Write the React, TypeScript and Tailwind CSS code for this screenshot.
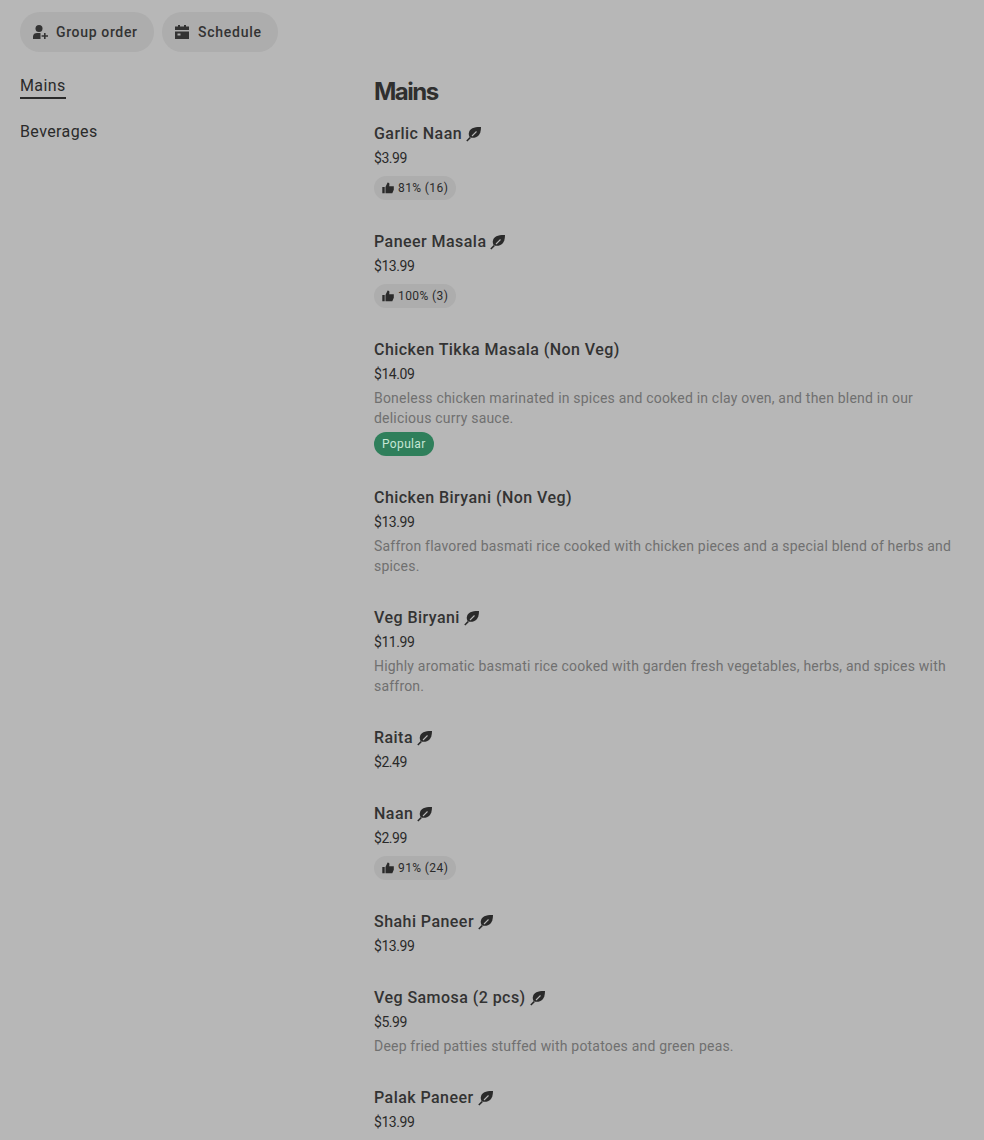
function Leaf() {
  return (
    <svg width="16" height="16" viewBox="0 0 16 16" className="shrink-0 text-[#2a2a2a]" fill="none">
      <path d="M15 1C9 .8 3.2 2 2.8 7.5c-.1 1.6.4 3 1.2 4C9.5 12.5 15 11 15 1Z" fill="currentColor" />
      <path d="M.8 15 4.2 11.6" stroke="currentColor" strokeWidth="1.5" />
      <path d="M6 10 10.5 5.5" stroke="#b7b7b7" strokeWidth="1.1" />
    </svg>
  );
}
function Thumb() {
  return (
    <svg width="12" height="12" viewBox="0 0 12 12" className="shrink-0 text-[#2a2a2a]" fill="currentColor">
      <path d="M0.3 5h2.4v6.3H0.3zM3.5 5 5.6 .5c1.2 0 2 .7 1.8 1.9L7.2 4.3H11.8V7.7L10.3 11.3H3.5Z" />
    </svg>
  );
}
type Item = { name: string; price: string; veg?: boolean; desc?: string; rating?: string; popular?: boolean };
const items: Item[] = [
  { name: 'Garlic Naan', price: '$3.99', veg: true, rating: '81% (16)' },
  { name: 'Paneer Masala', price: '$13.99', veg: true, rating: '100% (3)' },
  { name: 'Chicken Tikka Masala (Non Veg)', price: '$14.09', desc: 'Boneless chicken marinated in spices and cooked in clay oven, and then blend in our delicious curry sauce.', popular: true },
  { name: 'Chicken Biryani (Non Veg)', price: '$13.99', desc: 'Saffron flavored basmati rice cooked with chicken pieces and a special blend of herbs and spices.' },
  { name: 'Veg Biryani', price: '$11.99', veg: true, desc: 'Highly aromatic basmati rice cooked with garden fresh vegetables, herbs, and spices with saffron.' },
  { name: 'Raita', price: '$2.49', veg: true },
  { name: 'Naan', price: '$2.99', veg: true, rating: '91% (24)' },
  { name: 'Shahi Paneer', price: '$13.99', veg: true },
  { name: 'Veg Samosa (2 pcs)', price: '$5.99', veg: true, desc: 'Deep fried patties stuffed with potatoes and green peas.' },
  { name: 'Palak Paneer', price: '$13.99', veg: true, desc: 'Fresh spinach puree cooked with soft cottage cheese cubes, ginger, garlic and traditional spices.' },
];
export default function App() {
  return (
    <div className="h-[1140px] overflow-hidden bg-[#b7b7b7] text-[#2a2a2a] font-['Roboto',sans-serif]">
      <div className="flex gap-2 pl-5 pt-3">
        <button className="flex h-10 w-[134px] items-center gap-2 rounded-full bg-[#adadad] pl-3 text-sm font-medium tracking-[0.65px] text-[#333333]">
          <svg width="16" height="16" viewBox="0 0 16 16" fill="currentColor">
            <circle cx="7" cy="4.5" r="3.5" />
            <path d="M1 15v-2.5C1 10 3 9 5 9h3.5v6ZM12 9h1.6v2.2H16v1.6h-2.4V15H12v-2.2H9.6v-1.6H12Z" />
          </svg>
          Group order
        </button>
        <button className="flex h-10 w-[116px] items-center gap-2 rounded-full bg-[#adadad] pl-3 text-sm font-medium tracking-[0.75px] text-[#333333]">
          <svg width="16" height="16" viewBox="0 0 16 16" fill="currentColor">
            <path d="M4 1h2v1.5h4V1h2v1.5h3V6H1V2.5h3ZM1 7.5h14V15H1ZM3.5 9.5v2h3v-2Z" fillRule="evenodd" />
          </svg>
          Schedule
        </button>
      </div>
      <div className="flex pl-5 pr-5">
        <nav className="w-[354px] shrink-0 pt-[23px]">
          <div className="w-fit border-b-2 border-[#2a2a2a] text-base leading-[22px] font-normal tracking-[0.4px]">Mains</div>
          <div className="mt-[22px] text-base leading-[22px] font-normal tracking-[0.4px]">Beverages</div>
        </nav>
        <main className="min-w-0 flex-1 pt-[24px]">
          <h2 className="text-2xl leading-8 font-bold tracking-[-1.5px] text-[#2f2f2f] font-['Inter',sans-serif]">Mains</h2>
          <div className="mt-[14px]">
            {items.map((it) => (
              <div key={it.name} className="pb-[30px]">
                <div className="flex h-6 items-center gap-1 text-base font-[480] tracking-[0.45px] text-[#333333]">
                  {it.name}
                  {it.veg && <Leaf />}
                </div>
                <div className="mt-[2px] text-sm leading-5 tracking-[-0.45px]">{it.price}</div>
                {it.desc && <p className="mt-1 text-sm leading-5 tracking-[0.2px] text-[#707070]">{it.desc}</p>}
                {it.rating && (
                  <div className="mt-2 flex h-6 w-fit items-center gap-1 rounded-full bg-[#adadad] px-2 text-xs tracking-[0.4px]">
                    <Thumb />
                    {it.rating}
                  </div>
                )}
                {it.popular && (
                  <div className="mt-1 flex h-6 w-fit items-center rounded-full bg-[#2f7f5b] px-2 text-xs tracking-[0.35px] text-[#c5e6d5]">
                    Popular
                  </div>
                )}
              </div>
            ))}
          </div>
        </main>
      </div>
    </div>
  );
}
